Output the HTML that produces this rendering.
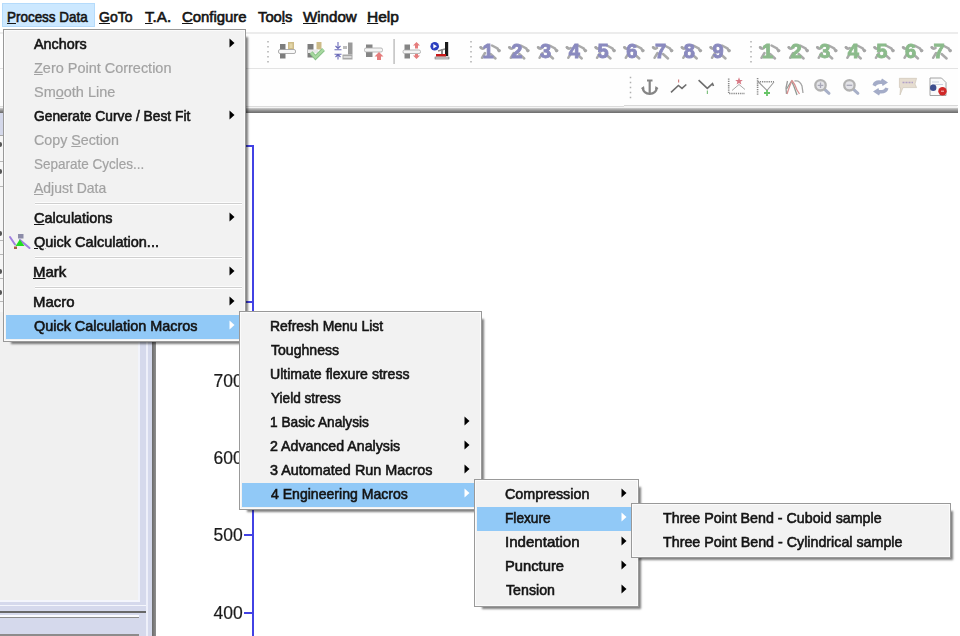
<!DOCTYPE html>
<html><head><meta charset="utf-8">
<style>
html,body{margin:0;padding:0;}
body{width:960px;height:636px;overflow:hidden;position:relative;background:#ffffff;font-family:"Liberation Sans",sans-serif;}
.abs{position:absolute;}
.t{position:absolute;font-size:15px;line-height:24px;height:24px;white-space:nowrap;color:#141414;-webkit-text-stroke:0.6px #141414;transform-origin:0 0;}
.dis{color:#a2a2a2;-webkit-text-stroke:0.2px #a2a2a2;}
.t u{text-decoration:underline;text-underline-offset:1px;}
.mb{font-size:14.6px;-webkit-text-stroke:0.6px #141414;}
.ar{position:absolute;}
.menu{position:absolute;box-sizing:border-box;background:#f2f2f2;border:1px solid #999999;box-shadow:inset 1px 1px 0 #fbfbfb, inset -1px -1px 0 #fbfbfb;}
.msh{position:absolute;box-shadow:2px 2px 2px 0 rgba(0,0,0,0.5);}
.hl{position:absolute;background:#91c9f7;}
.sep{position:absolute;height:1px;background:#cfcfcf;border-bottom:1px solid #ffffff;box-shadow:0 -1px 0 #fcfcfc;}
.lab{position:absolute;font-size:17.5px;line-height:20px;color:#1a1a1a;-webkit-text-stroke:0.2px #1a1a1a;}
</style></head><body>
<div id="wrap" style="position:absolute;left:0;top:0;width:960px;height:636px;overflow:hidden;filter:blur(0.4px)">
<div class="abs" style="left:0px;top:0px;width:960px;height:33px;background:#ffffff;"></div>
<div class="abs" style="left:2px;top:3px;width:91px;height:22px;background:#cce8ff;border:1px solid #b5dbfb"></div>
<div class="t mb" style="left:7.19px;top:5px;transform:scaleX(0.9213);"><u>P</u>rocess Data</div>
<div class="t mb" style="left:99.33px;top:5px;transform:scaleX(0.9613);"><u>G</u>oTo</div>
<div class="t mb" style="left:145.09px;top:5px;transform:scaleX(1.0383);"><u>T</u>.A.</div>
<div class="t mb" style="left:182.19px;top:5px;transform:scaleX(1.0210);"><u>C</u>onfigure</div>
<div class="t mb" style="left:257.70px;top:5px;transform:scaleX(1.0120);">Too<u>l</u>s</div>
<div class="t mb" style="left:302.90px;top:5px;transform:scaleX(1.0347);"><u>W</u>indow</div>
<div class="t mb" style="left:366.72px;top:5px;transform:scaleX(1.0638);"><u>H</u>elp</div>
<div class="abs" style="left:0px;top:34px;width:958px;height:34px;background:#fefefe;"></div>
<div class="abs" style="left:0px;top:32px;width:958px;height:2px;background:#ececec;"></div>
<div class="abs" style="left:0px;top:68px;width:958px;height:1px;background:#e3e3e3;"></div>
<div class="abs" style="left:0px;top:69px;width:958px;height:37px;background:#fefefe;"></div>
<div class="abs" style="left:0px;top:106px;width:624px;height:1px;background:#dcdcdc;"></div>
<div class="abs" style="left:624px;top:105px;width:334px;height:1px;background:#d8d8d8;"></div>
<div class="abs" style="left:624px;top:106px;width:333px;height:1px;background:#f4f4f4;"></div>
<div class="abs" style="left:0px;top:107px;width:958px;height:1px;background:#f4f4f4;"></div>
<div class="abs" style="left:0px;top:108px;width:958px;height:5px;background:linear-gradient(#cfcfcf,#a4a4a4 35%,#7c7c7c 75%,#6c6c6c);"></div>
<div class="abs" style="left:0px;top:113px;width:138px;height:487px;background:#f0f0f0;"></div>
<div class="abs" style="left:138px;top:113px;width:14px;height:523px;background:#d5d9ec;"></div>
<div class="abs" style="left:146px;top:113px;width:2px;height:523px;background:#eef0fa;"></div>
<div class="abs" style="left:138px;top:113px;width:2px;height:487px;background:#f2f4fb;"></div>
<div class="abs" style="left:152px;top:113px;width:4px;height:523px;background:linear-gradient(90deg,#6a6a6a,#909090);"></div>
<div class="abs" style="left:0px;top:600px;width:138px;height:36px;background:#d5d9ec;"></div>
<div class="abs" style="left:0px;top:600px;width:140px;height:2px;background:#f4f6fc;"></div>
<div class="abs" style="left:0px;top:605px;width:146px;height:1px;background:#f4f6fc;"></div>
<div class="abs" style="left:0px;top:611px;width:146px;height:2px;background:#686868;"></div>
<div class="abs" style="left:0px;top:615px;width:139px;height:2px;background:#fafbff;"></div>
<div class="abs" style="left:0px;top:617px;width:139px;height:1px;background:#8c8c8c;"></div>
<div class="abs" style="left:0px;top:634px;width:139px;height:2px;background:#8c8c8c;"></div>
<div class="abs" style="left:0px;top:113px;width:3px;height:22px;background:#d4d8ea;"></div>
<div class="abs" style="left:0px;top:135px;width:3px;height:1px;background:#a8a8a8;"></div>
<div class="abs" style="left:0px;top:136px;width:3px;height:176px;background:#f7f7f7;"></div>
<div class="abs" style="left:0px;top:161px;width:3px;height:1px;background:#b8b8b8;"></div>
<div class="abs" style="left:0px;top:186px;width:3px;height:1px;background:#b8b8b8;"></div>
<div class="abs" style="left:0px;top:240px;width:3px;height:1px;background:#b8b8b8;"></div>
<div class="abs" style="left:0px;top:254px;width:3px;height:1px;background:#b8b8b8;"></div>
<div class="abs" style="left:0px;top:278px;width:3px;height:1px;background:#b8b8b8;"></div>
<div class="abs" style="left:0px;top:301px;width:3px;height:1px;background:#b8b8b8;"></div>
<div class="abs" style="left:0px;top:142px;width:2px;height:5px;background:#555555;border-radius:0 2px 2px 0"></div>
<div class="abs" style="left:0px;top:169px;width:2px;height:5px;background:#555555;border-radius:0 2px 2px 0"></div>
<div class="abs" style="left:0px;top:231px;width:2px;height:5px;background:#555555;border-radius:0 2px 2px 0"></div>
<div class="abs" style="left:0px;top:269px;width:2px;height:5px;background:#555555;border-radius:0 2px 2px 0"></div>
<div class="abs" style="left:0px;top:290px;width:2px;height:5px;background:#555555;border-radius:0 2px 2px 0"></div>
<div class="abs" style="left:252px;top:145px;width:2px;height:491px;background:#4242e4;"></div>
<div class="abs" style="left:246px;top:145px;width:8px;height:2px;background:#4242e4;"></div>
<div class="abs" style="left:244px;top:301px;width:9px;height:2px;background:#4242e4;"></div>
<div class="abs" style="left:244px;top:380px;width:9px;height:2px;background:#4242e4;"></div>
<div class="lab" style="left:213.5px;top:371px">700</div>
<div class="abs" style="left:244px;top:457px;width:9px;height:2px;background:#4242e4;"></div>
<div class="lab" style="left:213.5px;top:448px">600</div>
<div class="abs" style="left:244px;top:534px;width:9px;height:2px;background:#4242e4;"></div>
<div class="lab" style="left:213.5px;top:525px">500</div>
<div class="abs" style="left:244px;top:612px;width:9px;height:2px;background:#4242e4;"></div>
<div class="lab" style="left:213.5px;top:603px">400</div>
<svg class="abs" style="left:0;top:0;filter:blur(0.35px)" width="960" height="636" viewBox="0 0 960 636"><rect x="267.25" y="41.0" width="1.5" height="1.5" fill="#b0b0b0"/><rect x="267.25" y="46.0" width="1.5" height="1.5" fill="#b0b0b0"/><rect x="267.25" y="51.0" width="1.5" height="1.5" fill="#b0b0b0"/><rect x="267.25" y="56.0" width="1.5" height="1.5" fill="#b0b0b0"/><rect x="267.25" y="61.0" width="1.5" height="1.5" fill="#b0b0b0"/><rect x="280" y="44" width="5.5" height="14.5" fill="#7c7c7c"/><rect x="288" y="42" width="6" height="7.5" fill="#cdbb88"/><rect x="289.5" y="43.5" width="3" height="4.5" fill="#e3d6a8"/><rect x="278.5" y="49.5" width="17" height="4" rx="1.5" fill="#f8f8f8" stroke="#9a9a9a" stroke-width="0.8"/><rect x="307.5" y="44" width="6" height="13.5" fill="#7c7c7c"/><rect x="316.5" y="42" width="5" height="7.5" fill="#cdbb88"/><rect x="308" y="49.5" width="10" height="3.5" fill="#e8e8e8"/><path d="M311 52.5 L315.5 57.5 L323.5 49.5" fill="none" stroke="#86c086" stroke-width="4" stroke-linejoin="miter"/><path d="M311 52.5 L315.5 57.5 L323.5 49.5" fill="none" stroke="#a8d8a0" stroke-width="2.2" stroke-linejoin="miter"/><g stroke="#6a6ab8" stroke-width="1.1" fill="none"><path d="M338 42 V48.5 M335.5 46 L338 48.5 L340.5 46 M334.5 49.8 H341.5"/><path d="M334.5 54.2 H341.5 M338 54.5 V59.5 M335.5 57 L338 54.5 L340.5 57"/></g><rect x="348" y="42.5" width="4.5" height="12" fill="#9a9a9a"/><rect x="343" y="46" width="4" height="3" fill="#bcbcbc"/><rect x="342.5" y="54.5" width="10" height="5" fill="#a8a8a8"/><rect x="343.5" y="56" width="8" height="2" fill="#d8d8d8"/><rect x="366" y="44.5" width="6.5" height="12.5" fill="#858585"/><rect x="364.5" y="48" width="18" height="4" rx="1.5" fill="#f4f4f4" stroke="#a8a8a8" stroke-width="0.8"/><path d="M379 52 L383.5 56.5 H381 V60 H377 V56.5 H374.5 Z" fill="#e57c7c"/><rect x="393.3" y="39" width="1.6" height="25" fill="#c4c4c4"/><rect x="404.5" y="44.5" width="5.5" height="14" fill="#858585"/><rect x="403" y="50" width="17.5" height="3.5" rx="1.5" fill="#f4f4f4" stroke="#a8a8a8" stroke-width="0.8"/><path d="M416.5 42 L420 45.5 H418 V48.5 H415 V45.5 H413 Z" fill="#e57c7c"/><path d="M416.5 59 L420 55.5 H418 V54 H415 V55.5 H413 Z" fill="#e57c7c"/><circle cx="434.7" cy="46.3" r="4.3" fill="#2b3fbf"/><path d="M433.3 44 L437 46.3 L433.3 48.6 Z" fill="#ffffff"/><rect x="445" y="42" width="3.2" height="14" fill="#1a1a1a"/><path d="M438 51 L445 49" stroke="#8a8a8a" stroke-width="1.5"/><rect x="441" y="49" width="2" height="5" fill="#8a8a8a"/><rect x="436" y="54" width="10" height="2.5" fill="#c81818"/><rect x="435" y="57" width="14" height="2" fill="#d8d8d8" stroke="#555" stroke-width="0.5"/><rect x="470.25" y="41.0" width="1.5" height="1.5" fill="#b0b0b0"/><rect x="470.25" y="46.0" width="1.5" height="1.5" fill="#b0b0b0"/><rect x="470.25" y="51.0" width="1.5" height="1.5" fill="#b0b0b0"/><rect x="470.25" y="56.0" width="1.5" height="1.5" fill="#b0b0b0"/><rect x="470.25" y="61.0" width="1.5" height="1.5" fill="#b0b0b0"/><g fill="none" stroke="#aaaaaa" stroke-width="2.5" stroke-linecap="round"><path d="M480.5 47.3 Q482.0 49.5 484.5 48"/><path d="M492.0 45.5 L497.5 48.5 L499.0 51"/><path d="M490.5 54 L495.5 58.5"/><path d="M485.0 53 L482.0 57.8"/></g><circle cx="499.2" cy="50.6" r="1.7" fill="#a6a6a6"/><circle cx="481.0" cy="47.6" r="1.4" fill="#a6a6a6"/><text x="488.0" y="58.3" text-anchor="middle" font-family="Liberation Sans" font-weight="bold" font-size="20" fill="#8a8abf" stroke="#8a8abf" stroke-width="0.9">1</text><g fill="none" stroke="#aaaaaa" stroke-width="2.5" stroke-linecap="round"><path d="M509.25 47.3 Q510.75 49.5 513.25 48"/><path d="M520.75 45.5 L526.25 48.5 L527.75 51"/><path d="M519.25 54 L524.25 58.5"/><path d="M513.75 53 L510.75 57.8"/></g><circle cx="527.95" cy="50.6" r="1.7" fill="#a6a6a6"/><circle cx="509.75" cy="47.6" r="1.4" fill="#a6a6a6"/><text x="516.75" y="58.3" text-anchor="middle" font-family="Liberation Sans" font-weight="bold" font-size="20" fill="#8a8abf" stroke="#8a8abf" stroke-width="0.9">2</text><g fill="none" stroke="#aaaaaa" stroke-width="2.5" stroke-linecap="round"><path d="M538.0 47.3 Q539.5 49.5 542.0 48"/><path d="M549.5 45.5 L555.0 48.5 L556.5 51"/><path d="M548.0 54 L553.0 58.5"/><path d="M542.5 53 L539.5 57.8"/></g><circle cx="556.7" cy="50.6" r="1.7" fill="#a6a6a6"/><circle cx="538.5" cy="47.6" r="1.4" fill="#a6a6a6"/><text x="545.5" y="58.3" text-anchor="middle" font-family="Liberation Sans" font-weight="bold" font-size="20" fill="#8a8abf" stroke="#8a8abf" stroke-width="0.9">3</text><g fill="none" stroke="#aaaaaa" stroke-width="2.5" stroke-linecap="round"><path d="M566.75 47.3 Q568.25 49.5 570.75 48"/><path d="M578.25 45.5 L583.75 48.5 L585.25 51"/><path d="M576.75 54 L581.75 58.5"/><path d="M571.25 53 L568.25 57.8"/></g><circle cx="585.45" cy="50.6" r="1.7" fill="#a6a6a6"/><circle cx="567.25" cy="47.6" r="1.4" fill="#a6a6a6"/><text x="574.25" y="58.3" text-anchor="middle" font-family="Liberation Sans" font-weight="bold" font-size="20" fill="#8a8abf" stroke="#8a8abf" stroke-width="0.9">4</text><g fill="none" stroke="#aaaaaa" stroke-width="2.5" stroke-linecap="round"><path d="M595.5 47.3 Q597.0 49.5 599.5 48"/><path d="M607.0 45.5 L612.5 48.5 L614.0 51"/><path d="M605.5 54 L610.5 58.5"/><path d="M600.0 53 L597.0 57.8"/></g><circle cx="614.2" cy="50.6" r="1.7" fill="#a6a6a6"/><circle cx="596.0" cy="47.6" r="1.4" fill="#a6a6a6"/><text x="603.0" y="58.3" text-anchor="middle" font-family="Liberation Sans" font-weight="bold" font-size="20" fill="#8a8abf" stroke="#8a8abf" stroke-width="0.9">5</text><g fill="none" stroke="#aaaaaa" stroke-width="2.5" stroke-linecap="round"><path d="M624.25 47.3 Q625.75 49.5 628.25 48"/><path d="M635.75 45.5 L641.25 48.5 L642.75 51"/><path d="M634.25 54 L639.25 58.5"/><path d="M628.75 53 L625.75 57.8"/></g><circle cx="642.95" cy="50.6" r="1.7" fill="#a6a6a6"/><circle cx="624.75" cy="47.6" r="1.4" fill="#a6a6a6"/><text x="631.75" y="58.3" text-anchor="middle" font-family="Liberation Sans" font-weight="bold" font-size="20" fill="#8a8abf" stroke="#8a8abf" stroke-width="0.9">6</text><g fill="none" stroke="#aaaaaa" stroke-width="2.5" stroke-linecap="round"><path d="M653.0 47.3 Q654.5 49.5 657.0 48"/><path d="M664.5 45.5 L670.0 48.5 L671.5 51"/><path d="M663.0 54 L668.0 58.5"/><path d="M657.5 53 L654.5 57.8"/></g><circle cx="671.7" cy="50.6" r="1.7" fill="#a6a6a6"/><circle cx="653.5" cy="47.6" r="1.4" fill="#a6a6a6"/><text x="660.5" y="58.3" text-anchor="middle" font-family="Liberation Sans" font-weight="bold" font-size="20" fill="#8a8abf" stroke="#8a8abf" stroke-width="0.9">7</text><g fill="none" stroke="#aaaaaa" stroke-width="2.5" stroke-linecap="round"><path d="M681.75 47.3 Q683.25 49.5 685.75 48"/><path d="M693.25 45.5 L698.75 48.5 L700.25 51"/><path d="M691.75 54 L696.75 58.5"/><path d="M686.25 53 L683.25 57.8"/></g><circle cx="700.45" cy="50.6" r="1.7" fill="#a6a6a6"/><circle cx="682.25" cy="47.6" r="1.4" fill="#a6a6a6"/><text x="689.25" y="58.3" text-anchor="middle" font-family="Liberation Sans" font-weight="bold" font-size="20" fill="#8a8abf" stroke="#8a8abf" stroke-width="0.9">8</text><g fill="none" stroke="#aaaaaa" stroke-width="2.5" stroke-linecap="round"><path d="M710.5 47.3 Q712.0 49.5 714.5 48"/><path d="M722.0 45.5 L727.5 48.5 L729.0 51"/><path d="M720.5 54 L725.5 58.5"/><path d="M715.0 53 L712.0 57.8"/></g><circle cx="729.2" cy="50.6" r="1.7" fill="#a6a6a6"/><circle cx="711.0" cy="47.6" r="1.4" fill="#a6a6a6"/><text x="718.0" y="58.3" text-anchor="middle" font-family="Liberation Sans" font-weight="bold" font-size="20" fill="#8a8abf" stroke="#8a8abf" stroke-width="0.9">9</text><rect x="750.25" y="41.0" width="1.5" height="1.5" fill="#b0b0b0"/><rect x="750.25" y="46.0" width="1.5" height="1.5" fill="#b0b0b0"/><rect x="750.25" y="51.0" width="1.5" height="1.5" fill="#b0b0b0"/><rect x="750.25" y="56.0" width="1.5" height="1.5" fill="#b0b0b0"/><rect x="750.25" y="61.0" width="1.5" height="1.5" fill="#b0b0b0"/><g fill="none" stroke="#aaaaaa" stroke-width="2.5" stroke-linecap="round"><path d="M760.0 47.3 Q761.5 49.5 764.0 48"/><path d="M771.5 45.5 L777.0 48.5 L778.5 51"/><path d="M770.0 54 L775.0 58.5"/><path d="M764.5 53 L761.5 57.8"/></g><circle cx="778.7" cy="50.6" r="1.7" fill="#a6a6a6"/><circle cx="760.5" cy="47.6" r="1.4" fill="#a6a6a6"/><text x="767.5" y="58.3" text-anchor="middle" font-family="Liberation Sans" font-weight="bold" font-size="20" fill="#8bbb8b" stroke="#8bbb8b" stroke-width="0.9">1</text><g fill="none" stroke="#aaaaaa" stroke-width="2.5" stroke-linecap="round"><path d="M788.6 47.3 Q790.1 49.5 792.6 48"/><path d="M800.1 45.5 L805.6 48.5 L807.1 51"/><path d="M798.6 54 L803.6 58.5"/><path d="M793.1 53 L790.1 57.8"/></g><circle cx="807.3000000000001" cy="50.6" r="1.7" fill="#a6a6a6"/><circle cx="789.1" cy="47.6" r="1.4" fill="#a6a6a6"/><text x="796.1" y="58.3" text-anchor="middle" font-family="Liberation Sans" font-weight="bold" font-size="20" fill="#8bbb8b" stroke="#8bbb8b" stroke-width="0.9">2</text><g fill="none" stroke="#aaaaaa" stroke-width="2.5" stroke-linecap="round"><path d="M817.2 47.3 Q818.7 49.5 821.2 48"/><path d="M828.7 45.5 L834.2 48.5 L835.7 51"/><path d="M827.2 54 L832.2 58.5"/><path d="M821.7 53 L818.7 57.8"/></g><circle cx="835.9000000000001" cy="50.6" r="1.7" fill="#a6a6a6"/><circle cx="817.7" cy="47.6" r="1.4" fill="#a6a6a6"/><text x="824.7" y="58.3" text-anchor="middle" font-family="Liberation Sans" font-weight="bold" font-size="20" fill="#8bbb8b" stroke="#8bbb8b" stroke-width="0.9">3</text><g fill="none" stroke="#aaaaaa" stroke-width="2.5" stroke-linecap="round"><path d="M845.8 47.3 Q847.3 49.5 849.8 48"/><path d="M857.3 45.5 L862.8 48.5 L864.3 51"/><path d="M855.8 54 L860.8 58.5"/><path d="M850.3 53 L847.3 57.8"/></g><circle cx="864.5" cy="50.6" r="1.7" fill="#a6a6a6"/><circle cx="846.3" cy="47.6" r="1.4" fill="#a6a6a6"/><text x="853.3" y="58.3" text-anchor="middle" font-family="Liberation Sans" font-weight="bold" font-size="20" fill="#8bbb8b" stroke="#8bbb8b" stroke-width="0.9">4</text><g fill="none" stroke="#aaaaaa" stroke-width="2.5" stroke-linecap="round"><path d="M874.4 47.3 Q875.9 49.5 878.4 48"/><path d="M885.9 45.5 L891.4 48.5 L892.9 51"/><path d="M884.4 54 L889.4 58.5"/><path d="M878.9 53 L875.9 57.8"/></g><circle cx="893.1" cy="50.6" r="1.7" fill="#a6a6a6"/><circle cx="874.9" cy="47.6" r="1.4" fill="#a6a6a6"/><text x="881.9" y="58.3" text-anchor="middle" font-family="Liberation Sans" font-weight="bold" font-size="20" fill="#8bbb8b" stroke="#8bbb8b" stroke-width="0.9">5</text><g fill="none" stroke="#aaaaaa" stroke-width="2.5" stroke-linecap="round"><path d="M903.0 47.3 Q904.5 49.5 907.0 48"/><path d="M914.5 45.5 L920.0 48.5 L921.5 51"/><path d="M913.0 54 L918.0 58.5"/><path d="M907.5 53 L904.5 57.8"/></g><circle cx="921.7" cy="50.6" r="1.7" fill="#a6a6a6"/><circle cx="903.5" cy="47.6" r="1.4" fill="#a6a6a6"/><text x="910.5" y="58.3" text-anchor="middle" font-family="Liberation Sans" font-weight="bold" font-size="20" fill="#8bbb8b" stroke="#8bbb8b" stroke-width="0.9">6</text><g fill="none" stroke="#aaaaaa" stroke-width="2.5" stroke-linecap="round"><path d="M931.6 47.3 Q933.1 49.5 935.6 48"/><path d="M943.1 45.5 L948.6 48.5 L950.1 51"/><path d="M941.6 54 L946.6 58.5"/><path d="M936.1 53 L933.1 57.8"/></g><circle cx="950.3000000000001" cy="50.6" r="1.7" fill="#a6a6a6"/><circle cx="932.1" cy="47.6" r="1.4" fill="#a6a6a6"/><text x="939.1" y="58.3" text-anchor="middle" font-family="Liberation Sans" font-weight="bold" font-size="20" fill="#8bbb8b" stroke="#8bbb8b" stroke-width="0.9">7</text><rect x="629.75" y="76.75" width="1.5" height="1.5" fill="#b0b0b0"/><rect x="629.75" y="81.75" width="1.5" height="1.5" fill="#b0b0b0"/><rect x="629.75" y="86.75" width="1.5" height="1.5" fill="#b0b0b0"/><rect x="629.75" y="91.75" width="1.5" height="1.5" fill="#b0b0b0"/><rect x="629.75" y="96.75" width="1.5" height="1.5" fill="#b0b0b0"/><g fill="none" stroke="#858585" stroke-width="2.2"><path d="M647 80.5 H652.5 M649.7 80.5 V93.5"/><path d="M642.5 87.5 Q643.5 93.5 649.7 93.8 Q656 93.5 657 87.5"/></g><path d="M641 88.5 L644 86 L644.5 89.5 Z M658.5 88.5 L655.5 86 L655 89.5 Z" fill="#858585"/><path d="M671 92.4 L678.4 85.5 L682 88.4 L686.3 84.5" fill="none" stroke="#6e6e6e" stroke-width="1.6"/><rect x="678" y="79.5" width="1.2" height="3" fill="#d08080"/><path d="M698.6 80.1 L707.3 88.4 L712.5 83.6 L713.5 86" fill="none" stroke="#6e6e6e" stroke-width="1.6"/><rect x="706.8" y="90.5" width="1.2" height="3.5" fill="#80c080"/><g stroke="#8a8a8a" stroke-width="1.6" fill="none" stroke-dasharray="1.3 0.9"><path d="M728.7 78.5 V93.5 H745"/></g><path d="M732 90.5 L739 84.5 L745 89.5" stroke="#a8a8a8" stroke-width="1" fill="none"/><path d="M739 77.3 L740 80 L742.8 80.1 L740.6 81.8 L741.4 84.5 L739 83 L736.6 84.5 L737.4 81.8 L735.2 80.1 L738 80 Z" fill="#d87a86"/><g stroke="#8a8a8a" stroke-width="1.6" fill="none" stroke-dasharray="1.3 0.9"><path d="M757.6 78 V95.5"/><path d="M757.6 81.8 H774"/></g><path d="M758.5 82 L767 90.5 L774 82" stroke="#9a9a9a" stroke-width="1.1" fill="none"/><path d="M767 90 V96 M764 93 H770" stroke="#66c466" stroke-width="1.8"/><g fill="none" stroke-width="1.3" stroke-linejoin="round"><path d="M786.5 94 L786 88 L787.5 81" stroke="#9a9a9a"/><path d="M786.5 89 L791.5 81 L794 86.5 L797 95" stroke="#8e9a94"/><path d="M787 94 Q789.5 86 792 80.5 Q795 84 797 90 L799.5 94" stroke="#d89090"/><path d="M794.5 81 Q800 80 802 86 L803 93" stroke="#a4a4a4"/></g><path d="M823.5 88.3 L829.0 93.3" stroke="#a8b0c8" stroke-width="3" stroke-linecap="round"/><circle cx="820.5" cy="85.3" r="5.2" fill="#e4e4e8" stroke="#b2b2b2" stroke-width="2.3"/><path d="M817.7 85.3 H823.3 M820.5 82.5 V88.1" stroke="#a8a8b8" stroke-width="1.3"/><path d="M852.4 88.3 L857.9 93.3" stroke="#a8b0c8" stroke-width="3" stroke-linecap="round"/><circle cx="849.4" cy="85.3" r="5.2" fill="#e4e4e8" stroke="#b2b2b2" stroke-width="2.3"/><path d="M846.6 85.3 H852.1999999999999" stroke="#a8a8b8" stroke-width="1.3"/><path d="M872.5 85 Q874 79.5 881 80.5 L882 78.5 L888 82.5 L882.5 86 L882 84 Q877 83.5 875.5 86.5 Z" fill="#a4acc8"/><path d="M888.5 88.5 Q887 94 880 93.5 L879 95.5 L873 91.5 L878.5 88 L879 90 Q884 90.5 885.5 87.5 Z" fill="#a4acc8"/><path d="M899.4 78.3 H916.6 L915 84 L916.6 87.6 H903 L900 95 L900.5 87.6 H899.4 Z" fill="#e6ddd0" stroke="#c8c0b0" stroke-width="0.6"/><path d="M902.5 82.5 H913" stroke="#b0a0c8" stroke-width="1.6" stroke-dasharray="2 1"/><path d="M930 78 H941.5 L946 82.5 V95.5 H930 Z" fill="#fafafa" stroke="#9a9a9a" stroke-width="0.9"/><path d="M932 82 H939 M932 84.5 H943" stroke="#c0c8d8" stroke-width="0.8"/><circle cx="933.2" cy="87.8" r="3.2" fill="#3e4e8e"/><circle cx="942.5" cy="91.3" r="4.2" fill="#d02828"/><rect x="941" y="90.6" width="3" height="1.3" fill="#f0a0a0"/></svg>
<div class="msh" style="left:9px;top:35px;width:237px;height:307px"></div>
<div class="menu" style="left:3px;top:29px;width:243px;height:313px"></div>
<div class="hl" style="left:6px;top:315px;width:237px;height:24px"></div>
<div class="t" style="left:34.30px;top:32px;transform:scaleX(0.9578);">Anchors</div>
<svg class="ar" style="left:229px;top:38px" width="6" height="10" viewBox="0 0 6 10"><path d="M0.5 0.5 L5.5 5 L0.5 9.5 Z" fill="#000000"/></svg>
<div class="t dis" style="left:33.82px;top:56px;transform:scaleX(0.9639);"><u>Z</u>ero Point Correction</div>
<div class="t dis" style="left:33.62px;top:80px;transform:scaleX(0.9650);">Sm<u>o</u>oth Line</div>
<div class="t" style="left:33.66px;top:104px;transform:scaleX(0.9191);">Generate Curve / Best Fit</div>
<svg class="ar" style="left:229px;top:110px" width="6" height="10" viewBox="0 0 6 10"><path d="M0.5 0.5 L5.5 5 L0.5 9.5 Z" fill="#000000"/></svg>
<div class="t dis" style="left:33.54px;top:128px;transform:scaleX(0.9509);">Copy <u>S</u>ection</div>
<div class="t dis" style="left:33.67px;top:152px;transform:scaleX(0.8996);">Separate Cycles...</div>
<div class="t dis" style="left:34.30px;top:176px;transform:scaleX(0.9304);"><u>A</u>djust Data</div>
<div class="t" style="left:33.53px;top:206px;transform:scaleX(0.9614);"><u>C</u>alculations</div>
<svg class="ar" style="left:229px;top:212px" width="6" height="10" viewBox="0 0 6 10"><path d="M0.5 0.5 L5.5 5 L0.5 9.5 Z" fill="#000000"/></svg>
<div class="t" style="left:33.62px;top:230px;transform:scaleX(0.9670);"><u>Q</u>uick Calculation...</div>
<div class="t" style="left:33.10px;top:260px;transform:scaleX(0.9969);"><u>M</u>ark</div>
<svg class="ar" style="left:229px;top:266px" width="6" height="10" viewBox="0 0 6 10"><path d="M0.5 0.5 L5.5 5 L0.5 9.5 Z" fill="#000000"/></svg>
<div class="t" style="left:33.11px;top:290px;transform:scaleX(0.9950);">Macro</div>
<svg class="ar" style="left:229px;top:296px" width="6" height="10" viewBox="0 0 6 10"><path d="M0.5 0.5 L5.5 5 L0.5 9.5 Z" fill="#000000"/></svg>
<div class="t" style="left:33.63px;top:314px;transform:scaleX(0.9615);">Quick Calculation Macros</div>
<svg class="ar" style="left:229px;top:320px" width="6" height="10" viewBox="0 0 6 10"><path d="M0.5 0.5 L5.5 5 L0.5 9.5 Z" fill="#ffffff"/></svg>
<div class="sep" style="left:35px;top:203px;width:207px"></div>
<div class="sep" style="left:35px;top:257px;width:207px"></div>
<div class="sep" style="left:35px;top:287px;width:207px"></div>
<svg class="abs" style="left:0;top:0" width="40" height="260" viewBox="0 0 40 260"><rect x="18" y="234" width="5.5" height="4.5" fill="#8c8ca8"/><path d="M10 237 L15 244.5 M20 240 L29.5 248" stroke="#a080e0" stroke-width="2" stroke-linecap="round"/><path d="M15.5 246 L19.8 239.5 L24.5 246 Z" fill="#22dd22"/><rect x="14" y="246.5" width="3" height="2.5" fill="#a06040"/></svg>
<div class="msh" style="left:245px;top:317px;width:237px;height:193px"></div>
<div class="menu" style="left:239px;top:311px;width:243px;height:199px"></div>
<div class="hl" style="left:242px;top:483px;width:237px;height:24px"></div>
<div class="t" style="left:269.88px;top:314px;transform:scaleX(0.9295);">Refresh Menu List</div>
<div class="t" style="left:270.72px;top:338px;transform:scaleX(0.9387);">Toughness</div>
<div class="t" style="left:269.97px;top:362px;transform:scaleX(0.9401);">Ultimate flexure stress</div>
<div class="t" style="left:270.64px;top:386px;transform:scaleX(0.9067);">Yield stress</div>
<div class="t" style="left:270.00px;top:410px;transform:scaleX(0.9129);">1 Basic Analysis</div>
<svg class="ar" style="left:464px;top:416px" width="6" height="10" viewBox="0 0 6 10"><path d="M0.5 0.5 L5.5 5 L0.5 9.5 Z" fill="#000000"/></svg>
<div class="t" style="left:270.34px;top:434px;transform:scaleX(0.9457);">2 Advanced Analysis</div>
<svg class="ar" style="left:464px;top:440px" width="6" height="10" viewBox="0 0 6 10"><path d="M0.5 0.5 L5.5 5 L0.5 9.5 Z" fill="#000000"/></svg>
<div class="t" style="left:270.42px;top:458px;transform:scaleX(0.9602);">3 Automated Run Macros</div>
<svg class="ar" style="left:464px;top:464px" width="6" height="10" viewBox="0 0 6 10"><path d="M0.5 0.5 L5.5 5 L0.5 9.5 Z" fill="#000000"/></svg>
<div class="t" style="left:270.72px;top:482px;transform:scaleX(0.9373);">4 Engineering Macros</div>
<svg class="ar" style="left:464px;top:488px" width="6" height="10" viewBox="0 0 6 10"><path d="M0.5 0.5 L5.5 5 L0.5 9.5 Z" fill="#ffffff"/></svg>
<div class="msh" style="left:480px;top:485px;width:159px;height:122px"></div>
<div class="menu" style="left:474px;top:479px;width:165px;height:128px"></div>
<div class="hl" style="left:477px;top:507px;width:159px;height:24px"></div>
<div class="t" style="left:505.24px;top:482px;transform:scaleX(0.9550);">Compression</div>
<svg class="ar" style="left:621px;top:488px" width="6" height="10" viewBox="0 0 6 10"><path d="M0.5 0.5 L5.5 5 L0.5 9.5 Z" fill="#000000"/></svg>
<div class="t" style="left:504.90px;top:506px;transform:scaleX(0.9129);">Flexure</div>
<svg class="ar" style="left:621px;top:512px" width="6" height="10" viewBox="0 0 6 10"><path d="M0.5 0.5 L5.5 5 L0.5 9.5 Z" fill="#ffffff"/></svg>
<div class="t" style="left:504.59px;top:530px;transform:scaleX(1.0056);">Indentation</div>
<svg class="ar" style="left:621px;top:536px" width="6" height="10" viewBox="0 0 6 10"><path d="M0.5 0.5 L5.5 5 L0.5 9.5 Z" fill="#000000"/></svg>
<div class="t" style="left:504.82px;top:554px;transform:scaleX(0.9828);">Puncture</div>
<svg class="ar" style="left:621px;top:560px" width="6" height="10" viewBox="0 0 6 10"><path d="M0.5 0.5 L5.5 5 L0.5 9.5 Z" fill="#000000"/></svg>
<div class="t" style="left:505.72px;top:578px;transform:scaleX(0.9465);">Tension</div>
<svg class="ar" style="left:621px;top:584px" width="6" height="10" viewBox="0 0 6 10"><path d="M0.5 0.5 L5.5 5 L0.5 9.5 Z" fill="#000000"/></svg>
<div class="msh" style="left:637px;top:509px;width:314px;height:49px"></div>
<div class="menu" style="left:631px;top:503px;width:320px;height:55px"></div>
<div class="t" style="left:662.92px;top:506px;transform:scaleX(0.9498);">Three Point Bend - Cuboid sample</div>
<div class="t" style="left:662.91px;top:530px;transform:scaleX(0.9510);">Three Point Bend - Cylindrical sample</div>
</div></body></html>
